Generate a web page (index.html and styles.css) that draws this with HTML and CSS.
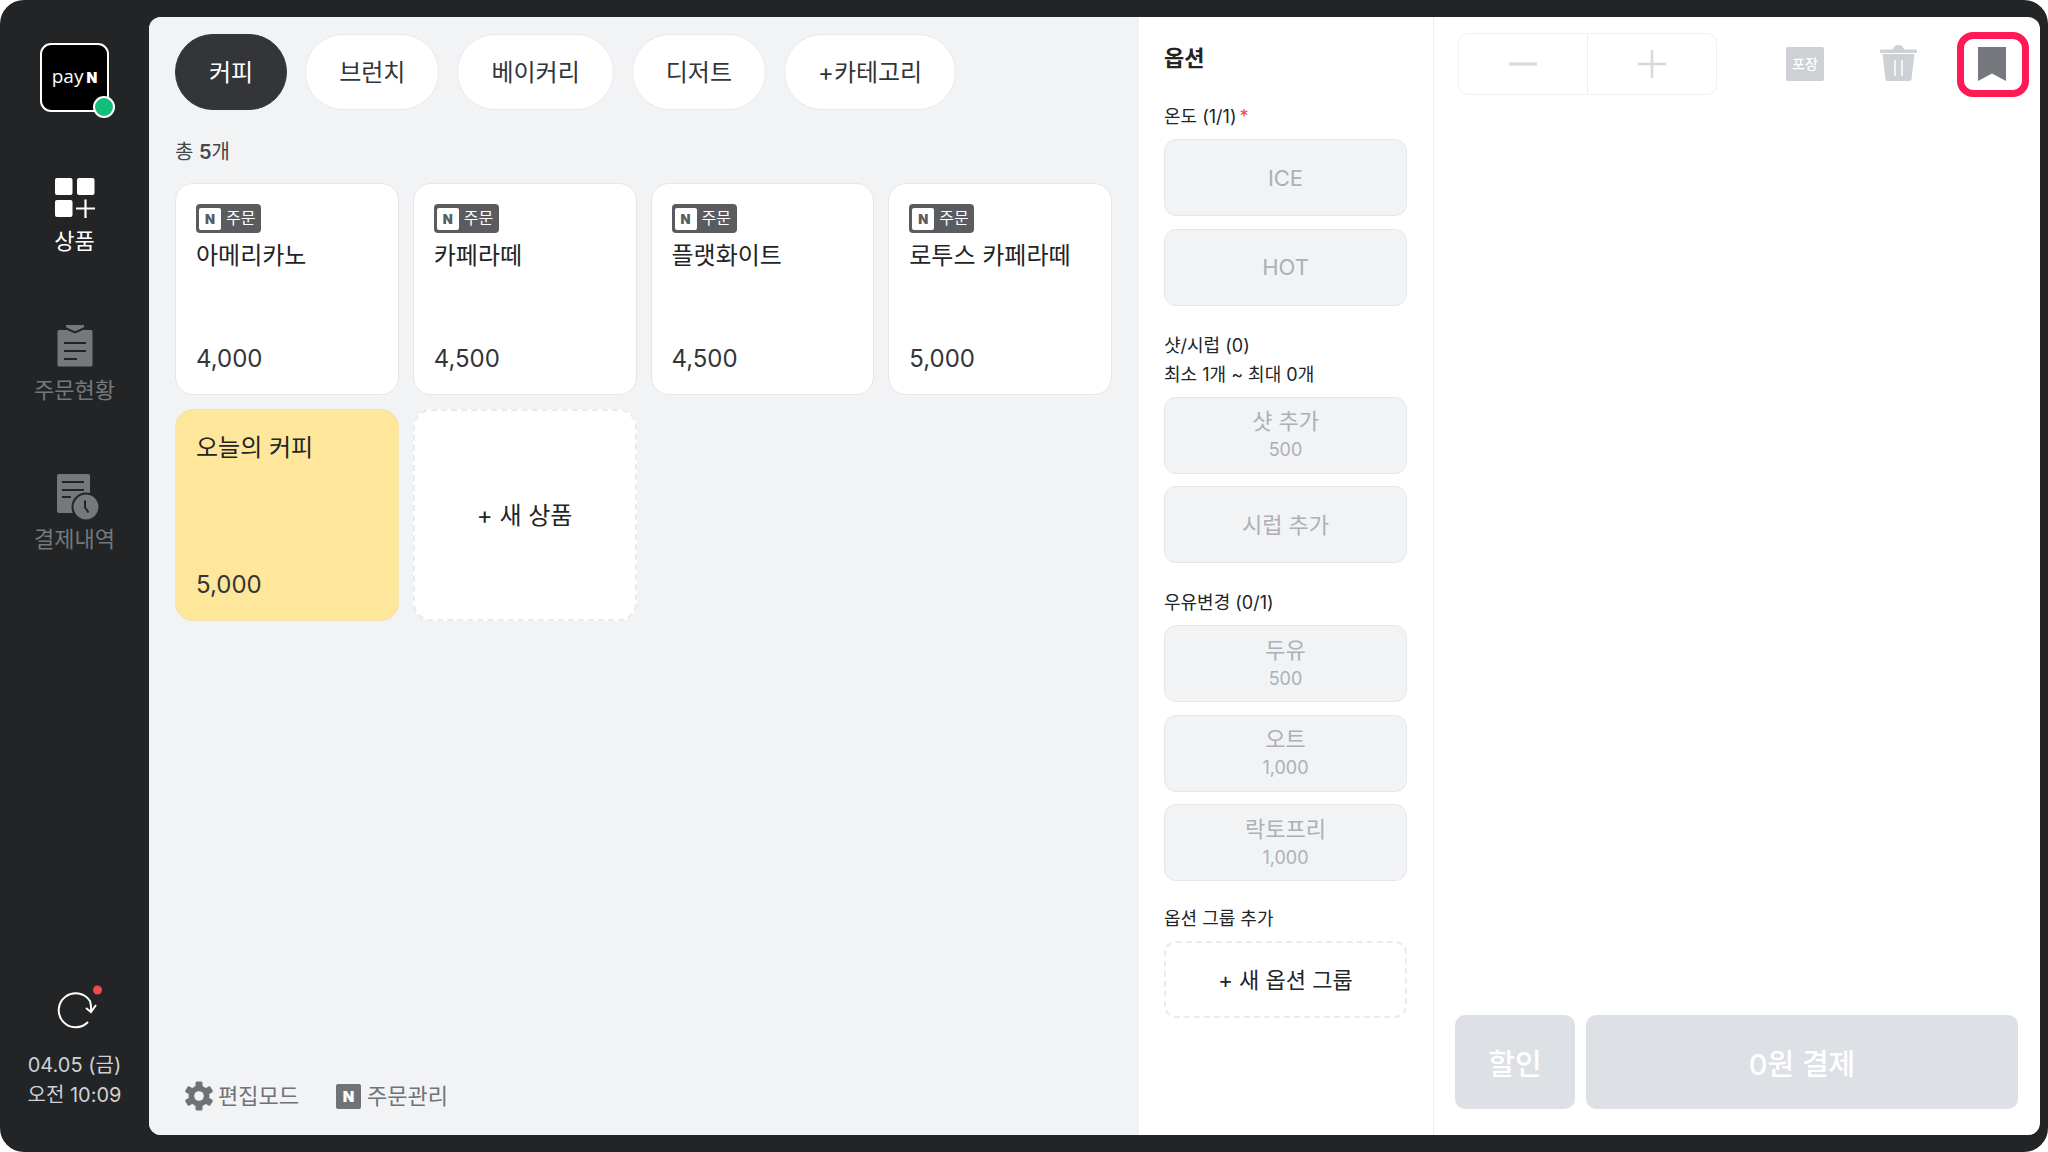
FILE: index.html
```html
<!DOCTYPE html>
<html lang="ko">
<head>
<meta charset="utf-8">
<title>POS</title>
<link rel="stylesheet" href="styles.css">
</head>
<body>
<div class="frame">
  <aside class="sidebar">
    <div class="logo"><span class="logo-pay">pay</span><span class="logo-n">N</span><span class="logo-dot"></span></div>
    <nav class="nav">
      <div class="nav-item active">
        <div class="nav-icon"><svg width="40" height="40" viewBox="0 0 40 40"><rect x="0" y="0" width="17.500" height="17" rx="2" fill="#fff"/><rect x="22" y="0" width="17.500" height="17" rx="2" fill="#fff"/><rect x="0" y="22" width="17.500" height="17" rx="2" fill="#fff"/><path d="M21 30.500H40M30.500 21.500V40" stroke="#fff" stroke-width="2.200"/></svg></div>
        <span>상품</span>
      </div>
      <div class="nav-item">
        <div class="nav-icon"><svg class="order-icon" width="36" height="44" viewBox="0 0 36 44"><path d="M2 6h7V1h18v5h7a1.500 1.500 0 0 1 1.500 1.500V41a1.500 1.500 0 0 1-1.500 1.500H2A1.500 1.500 0 0 1 .5 41V7.500A1.500 1.500 0 0 1 2 6z" fill="#75787d"/><path d="M7 3.500l11 5 11-5" fill="none" stroke="#222426" stroke-width="2"/><path d="M7 19h22M7 27h22M7 35h13" stroke="#222426" stroke-width="2"/></svg></div>
        <span>주문현황</span>
      </div>
      <div class="nav-item">
        <div class="nav-icon"><svg width="44" height="48" viewBox="0 0 44 48"><rect x="1" y="2" width="33" height="39" rx="2" fill="#75787d"/><path d="M6 10h22M6 18h22M6 25h9" stroke="#222426" stroke-width="2"/><circle cx="30" cy="35" r="13.500" fill="#75787d" stroke="#222426" stroke-width="2"/><path d="M29 28.500v7l3.500 5" fill="none" stroke="#222426" stroke-width="2"/></svg></div>
        <span>결제내역</span>
      </div>
    </nav>
    <div class="side-bottom">
      <svg class="refresh" width="48" height="48" viewBox="0 0 48 48"><path d="M37 37A17 17 0 1 1 39 16Q40.500 21 40 27" fill="none" stroke="#fff" stroke-width="2"/><path d="M35 23L40 27L45 20" fill="none" stroke="#fff" stroke-width="2"/><circle cx="46.500" cy="5" r="4.500" fill="#f4474d"/></svg>
      <div class="clock">04.05 (금)</div>
      <div class="clock">오전 10:09</div>
    </div>
  </aside>

  <main class="app">
    <section class="catalog">
      <div class="tabs">
        <div class="tab selected">커피</div>
        <div class="tab">브런치</div>
        <div class="tab">베이커리</div>
        <div class="tab">디저트</div>
        <div class="tab">+카테고리</div>
      </div>
      <div class="count">총 <b>5</b>개</div>
      <div class="grid">
        <div class="card">
          <div class="card-top"><div class="badge"><span class="badge-n">N</span>주문</div><div class="name">아메리카노</div></div>
          <div class="price">4,000</div>
        </div>
        <div class="card">
          <div class="card-top"><div class="badge"><span class="badge-n">N</span>주문</div><div class="name">카페라떼</div></div>
          <div class="price">4,500</div>
        </div>
        <div class="card">
          <div class="card-top"><div class="badge"><span class="badge-n">N</span>주문</div><div class="name">플랫화이트</div></div>
          <div class="price">4,500</div>
        </div>
        <div class="card">
          <div class="card-top"><div class="badge"><span class="badge-n">N</span>주문</div><div class="name">로투스 카페라떼</div></div>
          <div class="price">5,000</div>
        </div>
        <div class="card yellow">
          <div class="card-top"><div class="name">오늘의 커피</div></div>
          <div class="price">5,000</div>
        </div>
        <div class="card new">+ 새 상품</div>
      </div>
      <div class="catalog-foot">
        <div class="foot-item">
          <svg width="28" height="30" viewBox="0 0 28 30"><g fill="#6f7277"><circle cx="14" cy="15" r="10.500"/><rect x="10.500" y="0.500" width="7" height="29" rx="1.500"/><rect x="10.500" y="0.500" width="7" height="29" rx="1.500" transform="rotate(60 14 15)"/><rect x="10.500" y="0.500" width="7" height="29" rx="1.500" transform="rotate(120 14 15)"/></g><circle cx="14" cy="15" r="4.800" fill="#f1f3f5"/></svg>
          <span>편집모드</span>
        </div>
        <div class="foot-item">
          <span class="foot-n">N</span>
          <span>주문관리</span>
        </div>
      </div>
    </section>

    <section class="options">
      <h2 class="opt-title">옵션</h2>
      <div class="opt-section first">
        <div class="opt-label">온도 (1/1) <i class="req">*</i></div>
        <div class="opt-btn">ICE</div>
        <div class="opt-btn">HOT</div>
      </div>
      <div class="opt-section">
        <div class="opt-label">샷/시럽 (0)<br>최소 1개 ~ 최대 0개</div>
        <div class="opt-btn">샷 추가<small>500</small></div>
        <div class="opt-btn">시럽 추가</div>
      </div>
      <div class="opt-section">
        <div class="opt-label">우유변경 (0/1)</div>
        <div class="opt-btn">두유<small>500</small></div>
        <div class="opt-btn">오트<small>1,000</small></div>
        <div class="opt-btn">락토프리<small>1,000</small></div>
      </div>
      <div class="opt-section last">
        <div class="opt-label">옵션 그룹 추가</div>
        <div class="opt-btn add">+ 새 옵션 그룹</div>
      </div>
    </section>

    <section class="cart">
      <div class="cart-top">
        <div class="stepper">
          <div class="step"><svg width="28" height="28" viewBox="0 0 28 28"><path d="M0 14H28" stroke="#d5d8dc" stroke-width="3"/></svg></div>
          <div class="step"><svg width="28" height="32" viewBox="0 0 28 32"><path d="M0 16H28M14 2V30" stroke="#d5d8dc" stroke-width="2.500"/></svg></div>
        </div>
        <div class="pack">포장</div>
        <svg class="trash" width="37" height="36" viewBox="0 0 37 36"><path d="M13 5a5.500 5 0 0 1 11 0z" fill="#cdd0d4"/><rect x="0" y="4.500" width="37" height="3.500" rx="1" fill="#cdd0d4"/><path d="M2.500 9h32L31.500 34a2 2 0 0 1-2 2h-22a2 2 0 0 1-2-2z" fill="#cdd0d4"/><path d="M15 15V31M22 15V31" stroke="#fff" stroke-width="1.500"/></svg>
        <div class="mark">
          <svg width="28" height="34" viewBox="0 0 28 34"><path d="M0 0H28V34L14 26.500L0 34z" fill="#75787d"/></svg>
        </div>
      </div>
      <div class="pay-row">
        <div class="pay discount">할인</div>
        <div class="pay total">0원 결제</div>
      </div>
    </section>
  </main>
</div>
</body>
</html>
```

FILE: styles.css
```css
* { box-sizing: border-box; }
html, body { margin: 0; padding: 0; background: #fff; }
body {
  width: 2048px;
  height: 1152px;
  overflow: hidden;
  font-family: Inter, "Noto Sans CJK KR", "Noto Sans", sans-serif;
}
.frame {
  width: 2048px;
  height: 1152px;
  background: #222426;
  border-radius: 24px;
  display: flex;
  padding: 17px 8px 17px 0;
}

/* sidebar */
.sidebar {
  width: 149px;
  flex: none;
  margin-top: -17px;
  margin-bottom: -17px;
  padding-top: 43px;
  padding-bottom: 42px;
  display: flex;
  flex-direction: column;
  align-items: center;
}
.logo {
  position: relative;
  width: 69px;
  height: 69px;
  background: #000;
  border: 2px solid #fff;
  border-radius: 11px;
  color: #fff;
  display: flex;
  align-items: baseline;
  justify-content: center;
  gap: 3px;
  padding-top: 21px;
}
.logo-pay { font-family: "Open Sans", sans-serif; font-size: 19px; font-weight: 400; line-height: 20px; }
.logo-n { font-size: 14px; font-weight: 900; line-height: 20px; }
.logo-dot {
  position: absolute;
  right: -8px;
  bottom: -8px;
  width: 22px;
  height: 22px;
  border-radius: 50%;
  background: #10bd7b;
  border: 2px solid #fff;
}
.nav { margin-top: 62px; display: flex; flex-direction: column; gap: 68px; align-items: center; }
.nav-item {
  display: flex;
  flex-direction: column;
  align-items: center;
  gap: 5px;
  color: #75787d;
  font-size: 22px;
  line-height: 28px;
}
.nav-item.active { color: #fff; }
.nav-icon { height: 48px; display: flex; align-items: center; justify-content: center; }
.nav-item.active .nav-icon { padding-left: 1px; }
.order-icon { margin-top: -3px; }
.nav-item:last-child .nav-icon { padding-left: 7px; }
.side-bottom { margin-top: auto; display: flex; flex-direction: column; align-items: center; }
.refresh { margin-bottom: 17px; overflow: visible; }
.clock { color: #cfd1d4; font-size: 20px; line-height: 30px; white-space: nowrap; }

/* main */
.app {
  flex: 1;
  min-width: 0;
  display: flex;
  border-radius: 12px;
  overflow: hidden;
  background: #fff;
}
.catalog {
  width: 990px;
  flex: none;
  background: #f1f3f5;
  padding: 17px 27px 23px 26px;
  display: flex;
  flex-direction: column;
}
.tabs { display: flex; gap: 18px; }
.tab {
  height: 76px;
  padding: 0 33px;
  border: 1px solid #e8eaed;
  border-radius: 38px;
  background: #fff;
  color: #333538;
  font-size: 24px;
  line-height: 76px;
}
.tab.selected { background: #333538; border-color: #333538; color: #fff; }
.count { margin-top: 28px; height: 28px; line-height: 28px; font-size: 20px; color: #45474b; }
.count b { font-weight: 600; }
.grid {
  margin-top: 17px;
  display: grid;
  grid-template-columns: repeat(4, 1fr);
  grid-auto-rows: 212px;
  gap: 14px;
}
.card {
  background: #fff;
  border: 1px solid #e4e6e9;
  border-radius: 18px;
  padding: 20px 20px 17px;
  display: flex;
  flex-direction: column;
  justify-content: space-between;
  color: #222426;
}
.card.yellow { background: #fee69a; border-color: #f3e3ae; }
.card.new {
  padding: 0 0 4px;
  border: 2px dashed #e9ebed;
  align-items: center;
  justify-content: center;
  font-size: 24px;
  font-weight: 400;
}
.badge {
  width: 65px;
  height: 29px;
  background: #5a5c60;
  border-radius: 4px;
  color: #fff;
  font-size: 16px;
  line-height: 27px;
  padding-left: 3px;
  display: flex;
  align-items: center;
  gap: 5px;
}
.badge-n {
  width: 22px;
  height: 22px;
  background: #fff;
  border-radius: 2px;
  color: #5a5c60;
  font-size: 13px;
  font-weight: 900;
  line-height: 22px;
  text-align: center;
}
.name { font-size: 24px; line-height: 36px; margin-top: 5px; white-space: nowrap; }
.yellow .name { margin-top: 0; }
.price { font-size: 24px; line-height: 36px; color: #333538; }
.catalog-foot { margin-top: auto; padding-left: 10px; height: 32px; display: flex; align-items: center; gap: 37px; }
.foot-item { display: flex; align-items: center; gap: 5px; color: #6f7277; font-size: 22px; line-height: 32px; }
.foot-n {
  width: 25px;
  height: 25px;
  margin-right: 1px;
  background: #6f7277;
  border-radius: 2px;
  color: #fff;
  font-size: 15px;
  font-weight: 900;
  line-height: 25px;
  text-align: center;
}

/* options */
.options {
  width: 294px;
  flex: none;
  background: #fff;
  padding: 0 26px 0 25px;
}
.opt-title { margin: 26px 0 0; font-size: 22px; line-height: 31px; font-weight: 700; color: #222426; }
.opt-section { margin-top: 25px; display: flex; flex-direction: column; gap: 12.500px; }
.opt-section.first { margin-top: 28px; }
.opt-section.last { margin-top: 23px; }
.opt-label { font-size: 18px; line-height: 29px; font-weight: 400; color: #222426; margin-bottom: -4.500px; }
.req { color: #f4474d; font-style: normal; margin-left: -2px; }
.opt-btn {
  height: 77px;
  border: 1px solid #e5e7ea;
  border-radius: 12px;
  background: #f1f3f5;
  color: #adb0b5;
  font-size: 22px;
  line-height: 30px;
  display: flex;
  flex-direction: column;
  align-items: center;
  justify-content: center;
}
.opt-btn small { font-size: 18px; line-height: 28px; }
.opt-btn.add { background: #fff; border: 2px dashed #e9ebed; color: #222426; font-weight: 400; }

/* cart */
.cart {
  flex: 1;
  min-width: 0;
  border-left: 1px solid #eef0f2;
  padding: 16px 11px 26px 21px;
  display: flex;
  flex-direction: column;
}
.cart-top { display: flex; align-items: center; height: 62px; }
.stepper {
  width: 259px;
  height: 62px;
  flex: none;
  margin-left: 3px;
  border: 1px solid #eef0f2;
  border-radius: 10px;
  display: flex;
}
.step { flex: 1; display: flex; align-items: center; justify-content: center; }
.step + .step { border-left: 1px solid #eef0f2; }
.pack {
  margin-left: 69px;
  width: 38px;
  height: 34px;
  flex: none;
  background: #cdd0d4;
  border-radius: 2px;
  color: #fff;
  font-size: 14px;
  font-weight: 500;
  line-height: 34px;
  text-align: center;
}
.trash { margin-left: 56px; flex: none; margin-top: -2px; }
.mark {
  margin-left: 40px;
  width: 72px;
  height: 65px;
  flex: none;
  border: 7.500px solid #ff1a55;
  border-radius: 16px;
  padding-right: 3px;
  display: flex;
  align-items: center;
  justify-content: center;
}
.pay-row { margin-top: auto; margin-right: 11px; display: flex; gap: 11px; height: 94px; }
.pay {
  background: #dde0e5;
  border-radius: 10px;
  color: #fff;
  font-size: 29px;
  font-weight: 500;
  display: flex;
  align-items: center;
  justify-content: center;
}
.discount { width: 120px; flex: none; }
.total { flex: 1; }
```
